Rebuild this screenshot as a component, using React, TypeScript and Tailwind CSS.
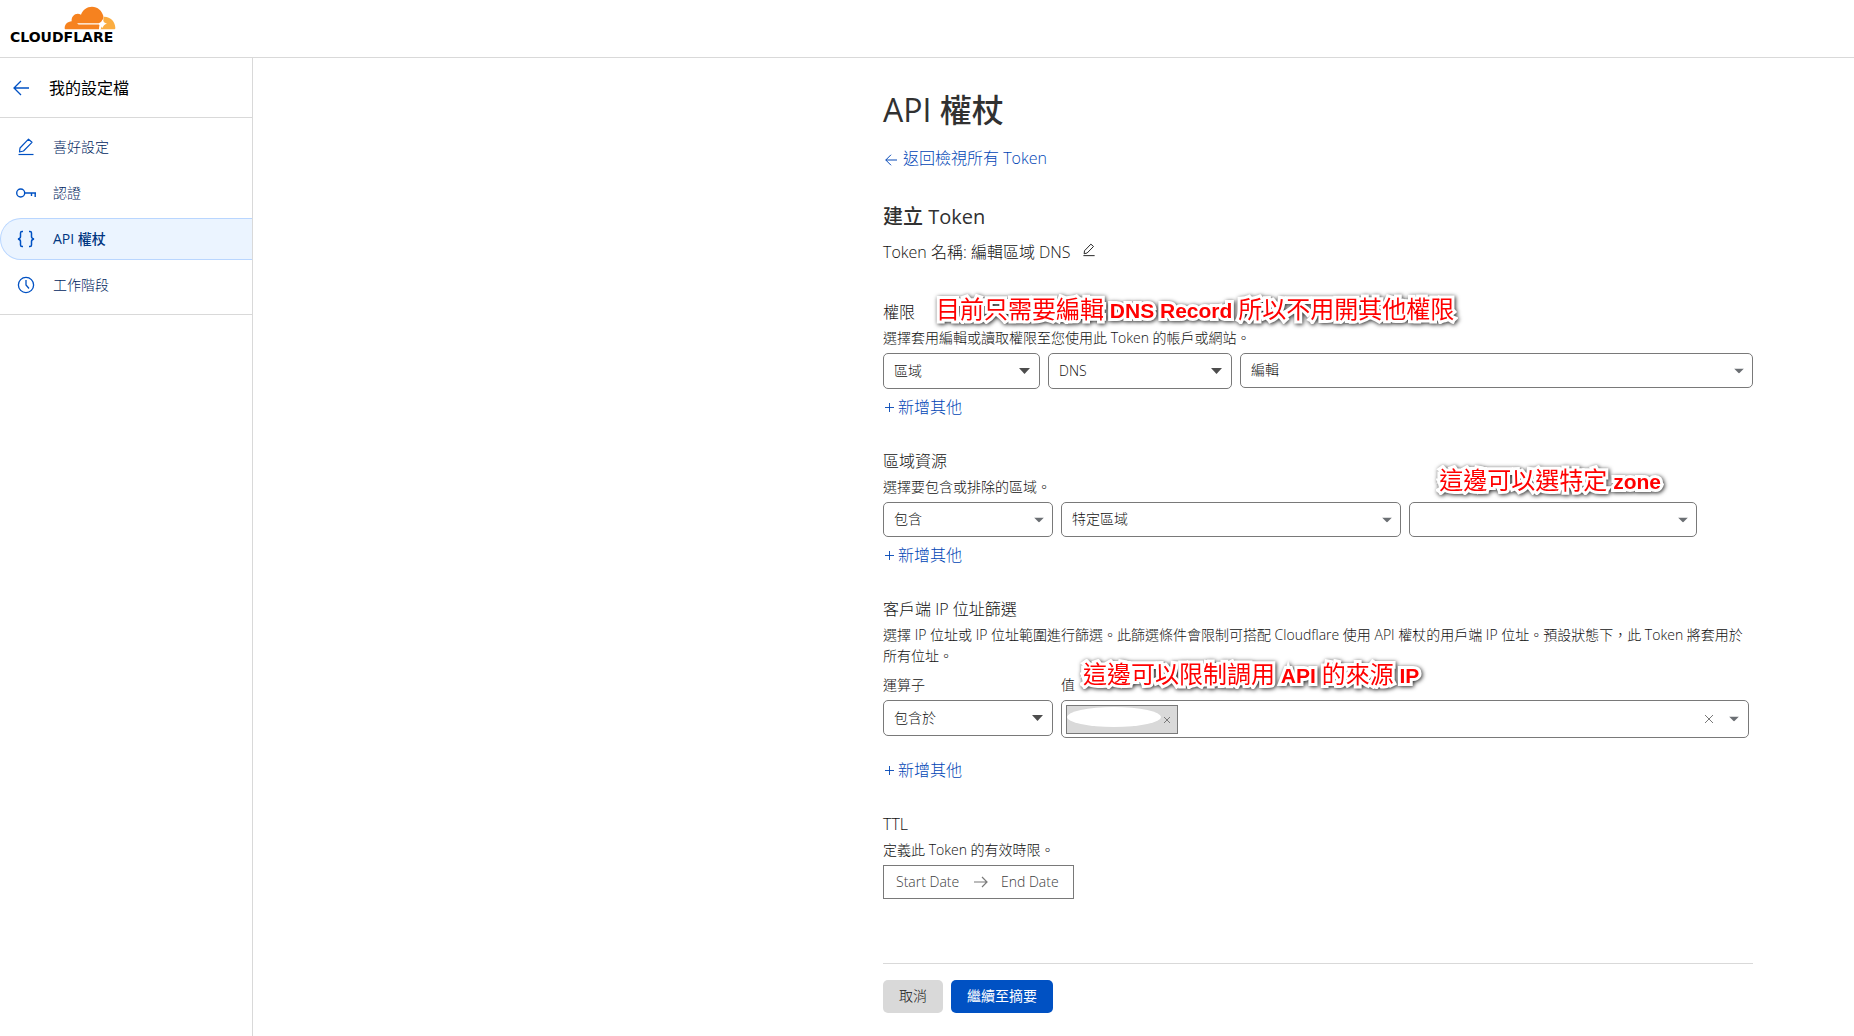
import React, { useId } from "react";

const CJK_FONT = "font-['Open_Sans','Noto_Sans_CJK_TC',sans-serif]";

function Logo() {
  return (
    <a href="#" aria-label="Cloudflare" className="flex w-[106px] flex-col text-black">
      <svg viewBox="192 17 156 72" className="ml-[54px] h-6 w-[52px]" aria-hidden="true">
        <path
          fill="#fbad41"
          d="M311 49C331 48 346 64 346 83Q346 87 343 87H301C302 82 305 76 309 71Z"
        />
        <path
          fill="#f6821f"
          d="M196 87Q194 87 194 84C194 72 203 64 215 63C213 46 229 35 243 43C248 28 261 19 276 19C293 19 306 31 310 47C311 56 307 64 300 69C299 75 299 80 297 87Z"
        />
        <path fill="#fff" d="M232 69H296Q305 67 308 57Q310 68 321 70Q310 72 308 83Q304 74 296 72.500H236Q232 72 232 69Z" />
        <path fill="#fff" d="M299 73L306 76L302 87H297Z" />
      </svg>
      <span className="font-['DejaVu_Sans',sans-serif] text-[14px] leading-[14px] font-bold">CLOUDFLARE</span>
    </a>
  );
}

function ArrowLeft({ className }: { className: string }) {
  return (
    <svg viewBox="0 0 16 16" fill="none" stroke="currentColor" className={className} aria-hidden="true">
      <path d="M16 8H1M8 1L1 8L8 15" strokeWidth="1.3" />
    </svg>
  );
}

function Pencil({ className }: { className: string }) {
  return (
    <svg viewBox="0 0 16 18" fill="none" stroke="currentColor" strokeLinejoin="round" className={className} aria-hidden="true">
      <path d="M1.5 14L2 10L10.500 1.200L14 4.300L5.500 13Z" strokeWidth="1.2" />
      <path d="M.5 16.500H15.500" strokeWidth="1.2" />
    </svg>
  );
}

function KeyIcon() {
  return (
    <svg viewBox="0 0 20 10" fill="none" stroke="currentColor" strokeWidth="1.4" className="h-[10px] w-5" aria-hidden="true">
      <circle cx="4.700" cy="5" r="4" />
      <path d="M8.700 5H20M19.200 5V9M15.500 5V8" />
    </svg>
  );
}

function Braces() {
  return (
    <svg viewBox="0 0 18 18" fill="none" stroke="currentColor" strokeWidth="1.5" className="size-[18px]" aria-hidden="true">
      <path d="M6 1.500H5Q3.500 1.500 3.500 3V6.500Q3.500 8.500 1 9Q3.500 9.500 3.500 11.500V15Q3.500 16.500 5 16.500H6" />
      <path d="M12 1.500H13Q14.500 1.500 14.500 3V6.500Q14.500 8.500 17 9Q14.500 9.500 14.500 11.500V15Q14.500 16.500 13 16.500H12" />
    </svg>
  );
}

function Clock() {
  return (
    <svg viewBox="0 0 18 18" fill="none" stroke="currentColor" strokeWidth="1.3" className="size-[18px]" aria-hidden="true">
      <circle cx="9" cy="9" r="7.600" />
      <path d="M9 4V9L12 12.500" />
    </svg>
  );
}

function NavItem({ icon, label, active }: { icon: React.ReactNode; label: string; active?: boolean }) {
  return (
    <li>
      <a
        href="#"
        aria-current={active ? "page" : undefined}
        className={
          active
            ? "flex h-[42px] items-center rounded-l-full border border-r-0 border-[#b9d6ff] bg-[#ebf4ff] pl-[15px] font-medium text-[#003681]"
            : "flex h-[42px] items-center pl-4 text-[#002660]"
        }
      >
        <span className="flex w-5 justify-center text-[#0051c3]">{icon}</span>
        <span className="ml-[17px] text-[14px] leading-5">{label}</span>
      </a>
    </li>
  );
}

function Caret({ small }: { small?: boolean }) {
  return (
    <svg
      viewBox="0 0 10 6"
      fill={small ? "#6b6f73" : "#4d4d4d"}
      className={
        small
          ? "pointer-events-none absolute top-1/2 right-[9px] h-[5px] w-[10px] -translate-y-1/2"
          : "pointer-events-none absolute top-1/2 right-[10px] h-[6px] w-[11px] -translate-y-1/2"
      }
      preserveAspectRatio="none"
      aria-hidden="true"
    >
      <path d="M0 0H10L5 6Z" />
    </svg>
  );
}

function Select({ label, value, className, small, id }: { label?: string; value: string; className: string; small?: boolean; id?: string }) {
  return (
    <div className={className}>
      <div className="relative">
        <select
          id={id}
          aria-label={label}
          className={
            small
              ? "block h-[35px] w-full appearance-none rounded-[5px] border border-[#797979] bg-white pb-[2px] pl-[10px] text-[14px] leading-[21px] text-[#111111]"
              : "block h-9 w-full appearance-none rounded-[5px] border border-[#797979] bg-white pb-[2px] pl-[10px] text-[14px] leading-[21px] text-[#111111]"
          }
        >
          <option>{value}</option>
        </select>
        <Caret small={small} />
      </div>
    </div>
  );
}

function AddMore({ className }: { className: string }) {
  return (
    <button type="button" className={className}>
      <svg viewBox="0 0 10 10" stroke="currentColor" className="ml-[2px] size-[9px]" aria-hidden="true">
        <path d="M5 0V10M0 5H10" />
      </svg>
      新增其他
    </button>
  );
}

const ADD = "flex items-center gap-1 text-[16px] leading-6 text-[#0045b5]";

function Note({ className, children }: { className: string; children: React.ReactNode }) {
  return (
    <p className={className}>
      <span className="font-['Liberation_Sans','Noto_Sans_CJK_TC',sans-serif]">{children}</span>
    </p>
  );
}

const NOTE =
  "absolute whitespace-nowrap text-[24px] leading-6 font-normal text-[#ff0000] [paint-order:stroke_fill] [stroke-linejoin:round] [-webkit-text-stroke:6px_white] [filter:drop-shadow(1px_1px_2px_rgba(0,0,0,0.85))]";

function En({ children }: { children: React.ReactNode }) {
  return <span className="text-[21px] font-bold">{children}</span>;
}

function SectionHead({ title, text }: { title: string; text: string }) {
  return (
    <>
      <h3 className="text-[16px] leading-6">{title}</h3>
      <p className="mt-[3px] mb-[5px] text-[14px] leading-[21px]">{text}</p>
    </>
  );
}

export default function App() {
  const opId = useId();
  const valueId = useId();
  return (
    <div lang="zh-Hant" className={`${CJK_FONT} flex min-h-screen flex-col bg-white font-light text-[#111111]`}>
      <header className="flex h-[58px] shrink-0 items-start border-b border-[#d9d9d9] pt-[6px] pl-[10px]">
        <Logo />
      </header>
      <div className="flex flex-1">
        <aside className="w-[253px] shrink-0 border-r border-[#d9d9d9]">
          <div className="flex h-[60px] items-center border-b border-[#d9d9d9] pl-[13px]">
            <a href="#" aria-label="返回" className="text-[#0051c3]">
              <ArrowLeft className="size-4" />
            </a>
            <span className="ml-5 text-[16px] leading-6 font-normal text-black">我的設定檔</span>
          </div>
          <nav className="border-b border-[#d9d9d9] pt-2 pb-2">
            <ul className="flex flex-col gap-1">
              <NavItem icon={<Pencil className="h-[18px] w-4" />} label="喜好設定" />
              <NavItem icon={<KeyIcon />} label="認證" />
              <NavItem icon={<Braces />} label="API 權杖" active />
              <NavItem icon={<Clock />} label="工作階段" />
            </ul>
          </nav>
        </aside>
        <main className="flex flex-1 justify-end pt-8 pr-[101px]">
          <form className="w-full max-w-[870px]" onSubmit={(e) => e.preventDefault()}>
            <h1 className="text-[32px] leading-10 font-medium text-[#313131]">API 權杖</h1>
            <a href="#" className="mt-4 flex items-center gap-[6px] text-[16px] leading-6 text-[#0045b5]">
              <ArrowLeft className="mt-1 ml-[2px] size-3" />
              返回檢視所有 Token
            </a>
            <h2 className="mt-8 text-[20px] leading-[30px] font-medium text-[#313131]">建立 Token</h2>
            <div className="mt-2 flex items-center text-[16px] leading-6">
              Token 名稱: 編輯區域 DNS
              <button type="button" aria-label="編輯名稱" className="mb-1 ml-3">
                <Pencil className="h-[14px] w-3" />
              </button>
            </div>

            <section className="relative mt-9">
              <SectionHead title="權限" text="選擇套用編輯或讀取權限至您使用此 Token 的帳戶或網站。" />
              <div className="flex items-start gap-2">
                <Select label="資源" value="區域" className="w-[157px]" />
                <Select label="項目" value="DNS" className="w-[184px]" />
                <Select label="權限" value="編輯" className="flex-1" small />
              </div>
              <AddMore className={`${ADD} mt-[6px]`} />
              <Note className={`${NOTE} -top-[3px] left-[53px]`}>
                目前只需要編輯<En> DNS Record </En>所以不用開其他權限
              </Note>
            </section>

            <section className="relative mt-[30px]">
              <SectionHead title="區域資源" text="選擇要包含或排除的區域。" />
              <div className="flex items-start gap-2">
                <Select label="包含或排除" value="包含" className="w-[170px]" small />
                <Select label="範圍" value="特定區域" className="w-[340px]" small />
                <Select label="區域" value="" className="w-[288px]" small />
              </div>
              <AddMore className={`${ADD} mt-[6px]`} />
              <Note className={`${NOTE} top-[19px] right-[92px]`}>
                這邊可以選特定<En> zone</En>
              </Note>
            </section>

            <section className="relative mt-[30px]">
              <SectionHead
                title="客戶端 IP 位址篩選"
                text="選擇 IP 位址或 IP 位址範圍進行篩選。此篩選條件會限制可搭配 Cloudflare 使用 API 權杖的用戶端 IP 位址。預設狀態下，此 Token 將套用於所有位址。"
              />
              <div className="mt-2 flex items-start gap-2 pr-1">
                <div className="w-[170px]">
                  <label htmlFor={opId} className="mb-[5px] block text-[14px] leading-[21px]">
                    運算子
                  </label>
                  <Select id={opId} value="包含於" className="w-full" />
                </div>
                <div className="flex-1">
                  <label htmlFor={valueId} className="mb-[5px] block text-[14px] leading-[21px]">
                    值
                  </label>
                  <div className="relative flex h-[38px] items-center rounded-[5px] border border-[#797979] pl-1">
                    <span className="flex h-[29px] w-28 items-center border border-[#797979] bg-[#d9d9d9]">
                      <span className="mb-[5px] h-5 w-[94px] rounded-[50%] bg-white" />
                      <button type="button" aria-label="移除" className="mt-[2px] ml-[3px] text-[#797979]">
                        <svg viewBox="0 0 6 6" stroke="currentColor" className="size-[6px]" aria-hidden="true">
                          <path d="M0 0L6 6M6 0L0 6" />
                        </svg>
                      </button>
                    </span>
                    <input id={valueId} className="h-7 min-w-0 flex-1 px-2 text-[14px] outline-none" />
                    <button type="button" aria-label="清除" className="mr-[35px] text-[#797979]">
                      <svg viewBox="0 0 8 8" stroke="currentColor" className="size-2" aria-hidden="true">
                        <path d="M0 0L8 8M8 0L0 8" />
                      </svg>
                    </button>
                    <Caret small />
                  </div>
                </div>
              </div>
              <AddMore className={`${ADD} mt-5`} />
              <Note className={`${NOTE} top-[65px] left-[200px]`}>
                這邊可以限制調用<En> API </En>的來源<En> IP</En>
              </Note>
            </section>

            <section className="mt-[30px]">
              <SectionHead title="TTL" text="定義此 Token 的有效時限。" />
              <div className="flex h-[34px] w-[191px] items-center border border-[#797979] pl-3">
                <input aria-label="Start Date" placeholder="Start Date" className="w-[78px] pb-[2px] text-[14px] leading-[21px] outline-none placeholder:text-[#3d3d3d]" />
                <svg viewBox="0 0 14 12" fill="none" stroke="#797979" strokeWidth="1.2" className="h-3 w-[14px] shrink-0" aria-hidden="true">
                  <path d="M0 6H13M8 1L13 6L8 11" />
                </svg>
                <input aria-label="End Date" placeholder="End Date" className="ml-[13px] w-[66px] pb-[2px] text-[14px] leading-[21px] outline-none placeholder:text-[#3d3d3d]" />
              </div>
            </section>

            <div className="mt-16 flex gap-2 border-t border-[#d9d9d9] pt-4">
              <button type="button" className="h-[33px] w-[60px] rounded-[5px] bg-[#d9d9d9] pb-[2px] text-[14px] leading-[21px]">
                取消
              </button>
              <button type="submit" className="h-[33px] w-[102px] rounded-[5px] bg-[#0051c3] pb-[2px] text-[14px] leading-[21px] font-normal text-white">
                繼續至摘要
              </button>
            </div>
          </form>
        </main>
      </div>
    </div>
  );
}
